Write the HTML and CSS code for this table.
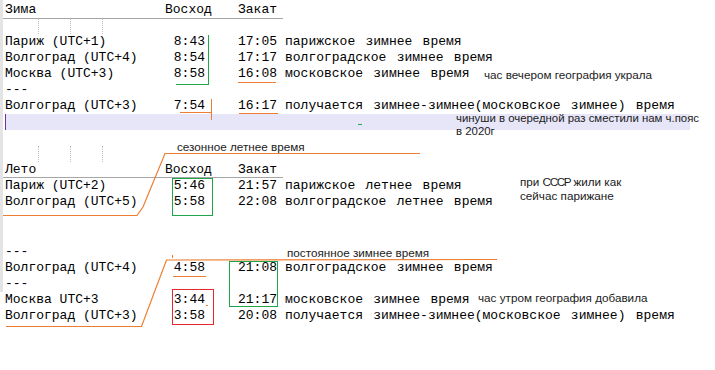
FILE: index.html
```html
<!DOCTYPE html>
<html lang="ru">
<head>
<meta charset="utf-8">
<title>Зима / Лето</title>
<link rel="stylesheet" href="styles.css">
</head>
<body>
<div class="sheet">
  <div class="gutter"></div>
  <div class="rows">
    <div class="row head first"><span class="c-a">Зима</span><span class="c-b">Восход</span><span class="c-c">Закат</span></div>
    <div class="row dots short"><i></i><i></i><i></i></div>
    <div class="row"><span class="c-a">Париж (UTC+1)</span><span class="c-b t">8:43</span><span class="c-c">17:05</span><span class="c-d">парижское зимнее время</span></div>
    <div class="row"><span class="c-a">Волгоград (UTC+4)</span><span class="c-b t">8:54</span><span class="c-c">17:17</span><span class="c-d">волгоградское зимнее время</span></div>
    <div class="row"><span class="c-a">Москва (UTC+3)</span><span class="c-b t">8:58</span><span class="c-c">16:08</span><span class="c-d">московское зимнее время</span></div>
    <div class="row"><span class="c-a">---</span></div>
    <div class="row"><span class="c-a">Волгоград (UTC+3)</span><span class="c-b t">7:54</span><span class="c-c">16:17</span><span class="c-d">получается зимнее-зимнее(московское зимнее) время</span></div>
    <div class="row band"></div>
    <div class="row"></div>
    <div class="row dots"><i></i><i></i><i></i></div>
    <div class="row head second"><span class="c-a">Лето</span><span class="c-b">Восход</span><span class="c-c">Закат</span></div>
    <div class="row"><span class="c-a">Париж (UTC+2)</span><span class="c-b t">5:46</span><span class="c-c">21:57</span><span class="c-d">парижское летнее время</span></div>
    <div class="row"><span class="c-a">Волгоград (UTC+5)</span><span class="c-b t">5:58</span><span class="c-c">22:08</span><span class="c-d">волгоградское летнее время</span></div>
    <div class="row"></div>
    <div class="row tall"></div>
    <div class="row"><span class="c-a">---</span></div>
    <div class="row"><span class="c-a">Волгоград (UTC+4)</span><span class="c-b t">4:58</span><span class="c-c">21:08</span><span class="c-d">волгоградское зимнее время</span></div>
    <div class="row"><span class="c-a">---</span></div>
    <div class="row"><span class="c-a">Москва UTC+3</span><span class="c-b t">3:44</span><span class="c-c">21:17</span><span class="c-d">московское зимнее время</span></div>
    <div class="row"><span class="c-a">Волгоград (UTC+3)</span><span class="c-b t">3:58</span><span class="c-c">20:08</span><span class="c-d">получается зимнее-зимнее(московское зимнее) время</span></div>
  </div>

  <svg class="marks" width="715" height="370" viewBox="0 0 715 370" xmlns="http://www.w3.org/2000/svg">
    <g fill="none" stroke-width="1" shape-rendering="crispEdges">
      <polyline class="green" points="208.5,35 208.5,84.5 176,84.5"/>
      <line class="orange" x1="237.5" y1="82.5" x2="276" y2="82.5"/>
      <line class="orange" x1="180" y1="112.5" x2="212" y2="112.5"/>
      <line class="orange" x1="211.5" y1="99" x2="211.5" y2="120"/>
      <line class="orange" x1="239" y1="113.5" x2="278" y2="113.5"/>
      <line class="green" x1="358" y1="124.5" x2="362" y2="124.5"/>
      <rect class="green" x="172.5" y="178.5" width="40" height="37"/>
      <line class="orange" x1="173" y1="276.5" x2="206" y2="276.5"/>
      <rect class="green" x="229.5" y="261.5" width="48" height="45"/>
      <rect class="red" x="172.5" y="289.5" width="41" height="35"/>
      <line class="orange" x1="172.5" y1="255" x2="172.5" y2="258"/>
      <line class="orange" x1="206" y1="305.5" x2="208" y2="305.5"/>
    </g>
    <g fill="none" stroke-width="1.2">
      <polyline class="orange" points="3,215.5 137,215.5 143,207 165,153.5 420,153.5"/>
      <polyline class="orange" points="6,326.5 141.5,326.5 166.5,260 497,259.5"/>
    </g>
  </svg>

  <div class="note n1">час вечером география украла</div>
  <div class="note n2">чинуши в очередной раз сместили нам ч.пояс<br>в 2020г</div>
  <div class="note n3">сезонное летнее время</div>
  <div class="note n4">при <span class="caps">СССР</span> жили как<br>сейчас парижане</div>
  <div class="note n5">постоянное зимнее время</div>
  <div class="note n6">час утром география добавила</div>
</div>
</body>
</html>
```

FILE: styles.css
```css
html, body {
  margin: 0;
  padding: 0;
  background: #ffffff;
}

body {
  font-family: "Liberation Mono", "Courier New", monospace;
  font-size: 13px;
  color: #000;
}

.sheet {
  position: relative;
  width: 715px;
  height: 370px;
  overflow: hidden;
  display: flex;
  align-items: flex-start;
}

.gutter {
  width: 3px;
  height: 292px;
  background: #e4e4e4;
  flex: none;
}

.rows {
  flex: 1;
  padding-top: 2px;
}

.row {
  display: grid;
  grid-template-columns: 160px 72px 48px 1fr;
  height: 16px;
  line-height: 16px;
  padding-left: 2px;
  white-space: pre;
}

.row.head {
  width: 278px;
  border-bottom: 1px solid #a6a6a6;
}

.row.head.second {
  height: 15px;
  line-height: 15px;
}

.row.tall {
  height: 18px;
}

.c-b.t {
  text-align: right;
  padding-right: 32px;
}

.c-c {
  padding-left: 1px;
}

.c-d {
  word-spacing: 2.5px;
}

.row.dots {
  display: flex;
  gap: 31px;
  padding-left: 35px;
}

.row.dots.short {
  height: 15px;
}

.row.dots i {
  width: 0;
  height: 100%;
  border-left: 1px dotted #bdbdbd;
}

.row.band {
  margin-left: 2px;
  width: 684px;
  padding-left: 0;
  background: #e6e6f8;
  border-left: 1px solid #7030a0;
}

.marks {
  position: absolute;
  left: 0;
  top: 0;
}

.marks .orange { stroke: #ed7d31; }
.marks .green { stroke: #1fa64a; }
.marks .red { stroke: #e8262b; }

.note {
  position: absolute;
  font-family: "Liberation Sans", Arial, sans-serif;
  font-size: 11.7px;
  line-height: 14px;
  color: #1b1b1b;
  white-space: nowrap;
}

.note .caps {
  letter-spacing: -1.4px;
}

.n1 { left: 484px; top: 68px; }
.n2 { left: 456px; top: 112px; line-height: 12.5px; font-size: 11.4px; }
.n3 { left: 177px; top: 140px; }
.n4 { left: 520px; top: 175px; }
.n5 { left: 287px; top: 246px; }
.n6 { left: 478px; top: 291px; }
```
